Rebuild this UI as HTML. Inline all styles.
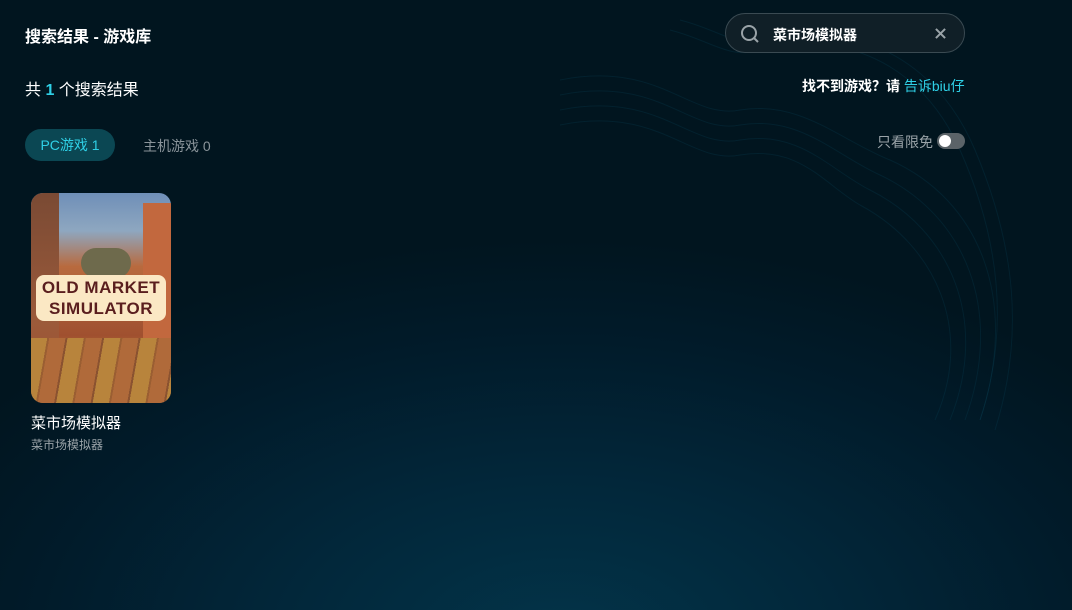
<!DOCTYPE html>
<html><head><meta charset="utf-8"><style>
*{margin:0;padding:0;box-sizing:border-box}
body{width:1072px;height:610px;overflow:hidden;font-family:"Liberation Sans","Noto Sans CJK SC",sans-serif;background:radial-gradient(ellipse 700px 400px at 560px 640px,#033449 0%,#02273a 40%,#011b2a 75%,#01151f 100%);position:relative;color:#fff}
.abs{position:absolute}
</style></head><body>
<svg class="abs" style="left:560px;top:0" width="512" height="610" viewBox="0 0 512 610" fill="none" stroke="#0a3f52" stroke-opacity="0.3" stroke-width="1">
<g>
<path d="M0 80 C100 60 130 120 180 110 C240 100 280 140 330 160 C420 200 460 300 420 420"/>
<path d="M0 95 C100 75 130 135 180 125 C240 115 275 155 320 175 C405 215 445 310 405 420"/>
<path d="M0 110 C100 90 130 150 180 140 C240 130 270 170 310 190 C390 230 430 320 390 420"/>
<path d="M0 125 C100 105 130 165 180 155 C240 145 265 185 300 205 C375 245 415 330 375 420"/>
<path d="M110 30 C150 40 170 60 200 50 C280 30 360 60 400 150 C440 240 450 330 420 420"/>
<path d="M120 20 C160 30 180 50 210 40 C290 20 375 55 415 150 C455 245 465 335 435 430"/>
</g></svg>
<div class="abs" style="left:25px;top:23px;font-size:16px;font-weight:bold">搜索结果 - 游戏库</div>
<div class="abs" style="left:725px;top:13px;width:240px;height:40px;border:1px solid #3a4a52;border-radius:20px;background:#101f27"></div>
<svg class="abs" style="left:739px;top:23px" width="22" height="22" viewBox="0 0 22 22" fill="none" stroke="#9aa3a8" stroke-width="2"><circle cx="10" cy="10" r="7"/><path d="M15 15l4 4"/></svg>
<div class="abs" style="left:773px;top:25px;font-size:14px;font-weight:bold">菜市场模拟器</div>
<svg class="abs" style="left:935px;top:28px" width="11" height="11" viewBox="0 0 12 12" stroke="#9aa3a8" stroke-width="2.2"><path d="M1 1l10 10M11 1L1 11"/></svg>
<div class="abs" style="left:25px;top:76px;font-size:16px">共 <b style="color:#2fd0e6">1</b> 个搜索结果</div>
<div class="abs" style="left:802px;top:76px;font-size:14px;font-weight:bold">找不到游戏？请 <span style="color:#2fd0e6;font-weight:normal">告诉biu仔</span></div>
<div class="abs" style="left:25px;top:129px;width:90px;height:32px;border-radius:16px;background:#0b4753;color:#2fd0e6;font-size:14px;line-height:32px;text-align:center">PC游戏 1</div>
<div class="abs" style="left:143px;top:136px;font-size:14px;color:#8a949a">主机游戏 0</div>
<div class="abs" style="left:877px;top:132px;font-size:14px;color:#9aa3a8">只看限免</div>
<div class="abs" style="left:937px;top:133px;width:28px;height:16px;border-radius:8px;background:#5b6368"></div>
<div class="abs" style="left:939px;top:135px;width:12px;height:12px;border-radius:6px;background:#fff"></div>
<div class="abs" style="left:31px;top:193px;width:140px;height:210px;border-radius:12px;overflow:hidden;background:linear-gradient(180deg,#6f8fb8 0%,#8ea7c0 18%,#b86a3e 35%,#a85a36 55%,#a0502f 68%,#b97a3a 78%,#b0683a 100%)">
 <div class="abs" style="left:0;top:0;width:28px;height:210px;background:linear-gradient(180deg,#7a4a34,#9b5a3a 60%,transparent)"></div>
 <div class="abs" style="right:0;top:10px;width:28px;height:150px;background:#c2683e"></div>
 <div class="abs" style="left:50px;top:55px;width:50px;height:30px;border-radius:25px;background:#6e6a4c"></div>
 <div class="abs" style="left:0;top:145px;width:140px;height:65px;background:repeating-linear-gradient(100deg,#b8843c 0 16px,#9a5e32 16px 18px,#b06a3a 18px 34px,#8a5230 34px 36px)"></div>
 <div class="abs" style="left:5px;top:82px;width:130px;height:46px;border-radius:8px;background:#fbe8c4;color:#5a1e1e;font-weight:bold;font-size:17px;line-height:21px;text-align:center;padding-top:2px;letter-spacing:0.5px">OLD MARKET<br>SIMULATOR</div>
</div>
<div class="abs" style="left:31px;top:412px;font-size:15px">菜市场模拟器</div>
<div class="abs" style="left:31px;top:436px;font-size:12px;color:#9aa3a8">菜市场模拟器</div>
</body></html>
